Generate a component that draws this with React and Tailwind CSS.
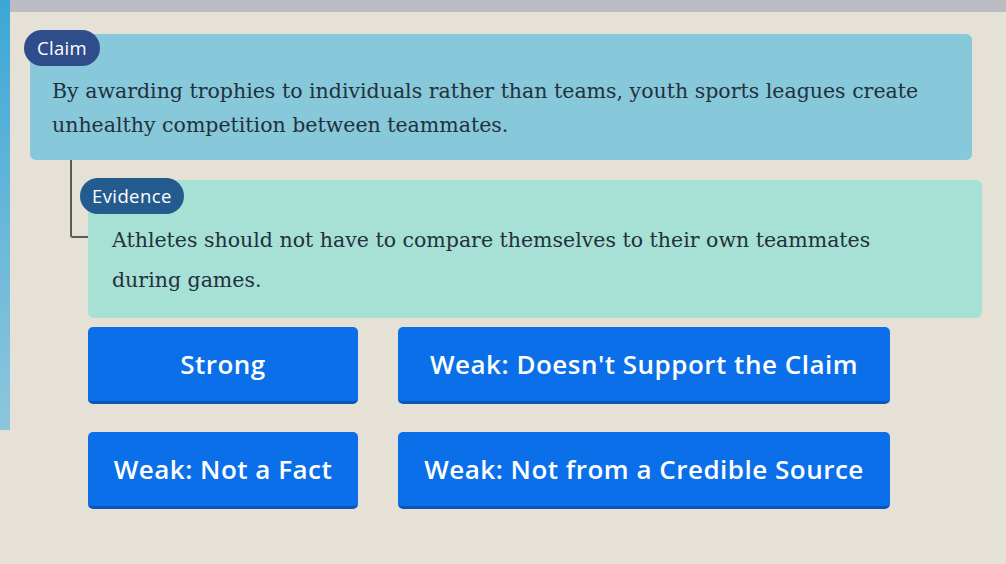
import React from 'react';

const serif = { fontFamily: '"DejaVu Serif", "Liberation Serif", serif' };
const sans = { fontFamily: '"Open Sans", Lato, sans-serif' };

const answers = [
  'Strong',
  "Weak: Doesn't Support the Claim",
  'Weak: Not a Fact',
  'Weak: Not from a Credible Source',
];

export default function App() {
  return (
    <div className="w-[1006px] h-[564px] bg-[#e6e1d6] overflow-hidden flex">
      {/* left bezel strip */}
      <div className="w-[10px] h-[430px] bg-gradient-to-b from-[#3aa7d6] to-[#8cc6dc] shrink-0"></div>

      <div className="flex-1 flex flex-col">
        {/* top grey band */}
        <div className="h-[12px] bg-[#bcbbc3]"></div>

        {/* Claim */}
        <div className="ml-[20px] mr-[34px] mt-[22px] relative">
          <div
            className="absolute -left-[6px] -top-[4px] h-[36px] px-[13px] rounded-full bg-[#2f4c8b] text-white text-[18.5px] tracking-[0.3px] flex items-center"
            style={sans}
          >
            Claim
          </div>
          <div className="bg-[#87c8da] rounded-[6px] pt-[40px] pb-[18px] px-[22px]">
            <p className="text-[20.5px] leading-[34px] text-[#22313b] whitespace-nowrap" style={serif}>
              By awarding trophies to individuals rather than teams, youth sports leagues create
              <br />
              unhealthy competition between teammates.
            </p>
          </div>
        </div>

        {/* Evidence */}
        <div className="flex">
          <div className="ml-[60px] w-[18px] h-[78px] border-l-2 border-b-2 border-[#5b5b5b] rounded-bl-[3px] shrink-0"></div>
          <div className="flex-1 mr-[24px] mt-[20px] relative">
            <div
              className="absolute -left-[8px] -top-[2px] h-[36px] px-[12px] rounded-full bg-[#245b8f] text-white text-[18.5px] tracking-[0.4px] flex items-center"
              style={sans}
            >
              Evidence
            </div>
            <div className="bg-[#a7e0d5] rounded-[6px] pt-[40px] pb-[18px] px-[24px]">
              <p className="text-[20.5px] leading-[40px] text-[#22313b] whitespace-nowrap" style={serif}>
                Athletes should not have to compare themselves to their own teammates
                <br />
                during games.
              </p>
            </div>
          </div>
        </div>

        {/* Answer choices */}
        <div className="grid grid-cols-[270px_492px] gap-x-[40px] gap-y-[28px] ml-[78px] mt-[9px]">
          {answers.map((a, i) => (
            <button
              key={i}
              className="h-[77px] rounded-[5px] bg-[#0b6fe9] border-b-[3px] border-[#0a55b5] text-white text-[26px] font-semibold tracking-[0.5px] flex items-center justify-center"
              style={sans}
            >
              {a}
            </button>
          ))}
        </div>
      </div>
    </div>
  );
}
